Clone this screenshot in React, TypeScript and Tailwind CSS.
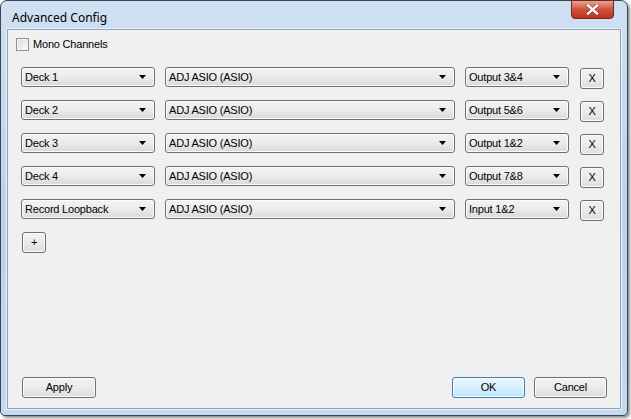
const rows = [
  { name: 'Deck 1', out: 'Output 3&4' },
  { name: 'Deck 2', out: 'Output 5&6' },
  { name: 'Deck 3', out: 'Output 1&2' },
  { name: 'Deck 4', out: 'Output 7&8' },
  { name: 'Record Loopback', out: 'Input 1&2' },
]

function Arrow() {
  return (
    <svg width="7" height="4" viewBox="0 0 7 4" className="shrink-0">
      <path d="M0 0h7L3.5 4z" fill="#000" />
    </svg>
  )
}

function Combo({ label, width }: { label: string; width: string }) {
  return (
    <div
      className={`${width} h-[20px] flex items-center justify-between pl-[3px] pr-[8px] rounded-[3px] border border-[#707070] bg-gradient-to-b from-[#f3f3f3] via-[#ebebeb] to-[#d9d9d9] shadow-[inset_0_0_0_1px_#fcfcfc] text-black`}
    >
      <span>{label}</span>
      <Arrow />
    </div>
  )
}

function Button({ label, width, def }: { label: string; width: string; def?: boolean }) {
  return (
    <div
      className={`${width} h-[21px] flex items-center justify-center rounded-[3px] border ${
        def ? 'border-[#3c7fb1] bg-gradient-to-b from-[#eaf6fd] via-[#d9f0fc] to-[#bee6fd]' : 'border-[#707070] bg-gradient-to-b from-[#f2f2f2] via-[#ebebeb] to-[#dddddd]'
      } shadow-[inset_0_0_0_1px_#fbfbfb] text-black`}
    >
      {label}
    </div>
  )
}

export default function App() {
  return (
    <div className="w-[631px] h-[419px] bg-white" style={{ fontFamily: '"Liberation Sans", Arial, sans-serif' }}>
      <div className="relative w-[628px] h-[416px] rounded-t-[7px] rounded-b-[5px] border border-[#3b4450] bg-gradient-to-b from-[#cfe0f2] via-[#bcd3eb] to-[#c4d8ee] shadow-[2px_2px_3px_rgba(0,0,0,0.45)] flex flex-col">
        <div className="h-[28px] shrink-0 pl-[11px] pt-[8px] text-[12px] text-black" style={{ fontFamily: '"Noto Sans", "Open Sans", sans-serif' }}>
          Advanced Config
        </div>
        <div className="absolute top-[-1px] right-[13px] w-[43px] h-[19px] rounded-b-[4px] border border-[#6a2a25] bg-gradient-to-b from-[#e8a291] via-[#d0513c] to-[#c1311d] flex items-center justify-center">
          <svg width="13" height="11" viewBox="0 0 13 11">
            <path d="M2 1.5l9 8M11 1.5l-9 8" stroke="#3a1510" strokeWidth="3.6" strokeLinecap="square" opacity="0.5" />
            <path d="M2 1.5l9 8M11 1.5l-9 8" stroke="#fff" strokeWidth="2.4" strokeLinecap="square" />
          </svg>
        </div>
        <div className="mx-[6px] mb-[6px] flex-1 border border-[#8da3bb] shadow-[0_0_0_1px_#e8f1fa] bg-[#f0f0f0] flex flex-col text-[11px] tracking-[-0.2px] px-[8px] pt-[8px] pb-[10px]">
          <label className="flex items-center gap-[4px] h-[13px]">
            <span className="w-[13px] h-[13px] border border-[#8e8f8f] bg-gradient-to-br from-[#dcdcdc] to-[#fbfbfb] shadow-[inset_0_0_0_1px_#f4f4f4]" />
            <span>Mono Channels</span>
          </label>
          <div className="flex flex-col gap-[11px] mt-[16px] pl-[5px]">
            {rows.map((r) => (
              <div key={r.name} className="flex items-start h-[22px]">
                <Combo label={r.name} width="w-[134px]" />
                <div className="ml-[10px]">
                  <Combo label="ADJ ASIO (ASIO)" width="w-[290px]" />
                </div>
                <div className="ml-[10px]">
                  <Combo label={r.out} width="w-[104px]" />
                </div>
                <div className="ml-[11px] mt-[1px]">
                  <Button label="X" width="w-[24px]" />
                </div>
              </div>
            ))}
            <div className="pl-[1px]">
              <Button label="+" width="w-[24px]" />
            </div>
          </div>
          <div className="mt-auto flex items-center pl-[6px] pr-[5px]">
            <Button label="Apply" width="w-[74px]" />
            <div className="ml-auto flex gap-[9px]">
              <Button label="OK" width="w-[73px]" def />
              <Button label="Cancel" width="w-[73px]" />
            </div>
          </div>
        </div>
      </div>
    </div>
  )
}
